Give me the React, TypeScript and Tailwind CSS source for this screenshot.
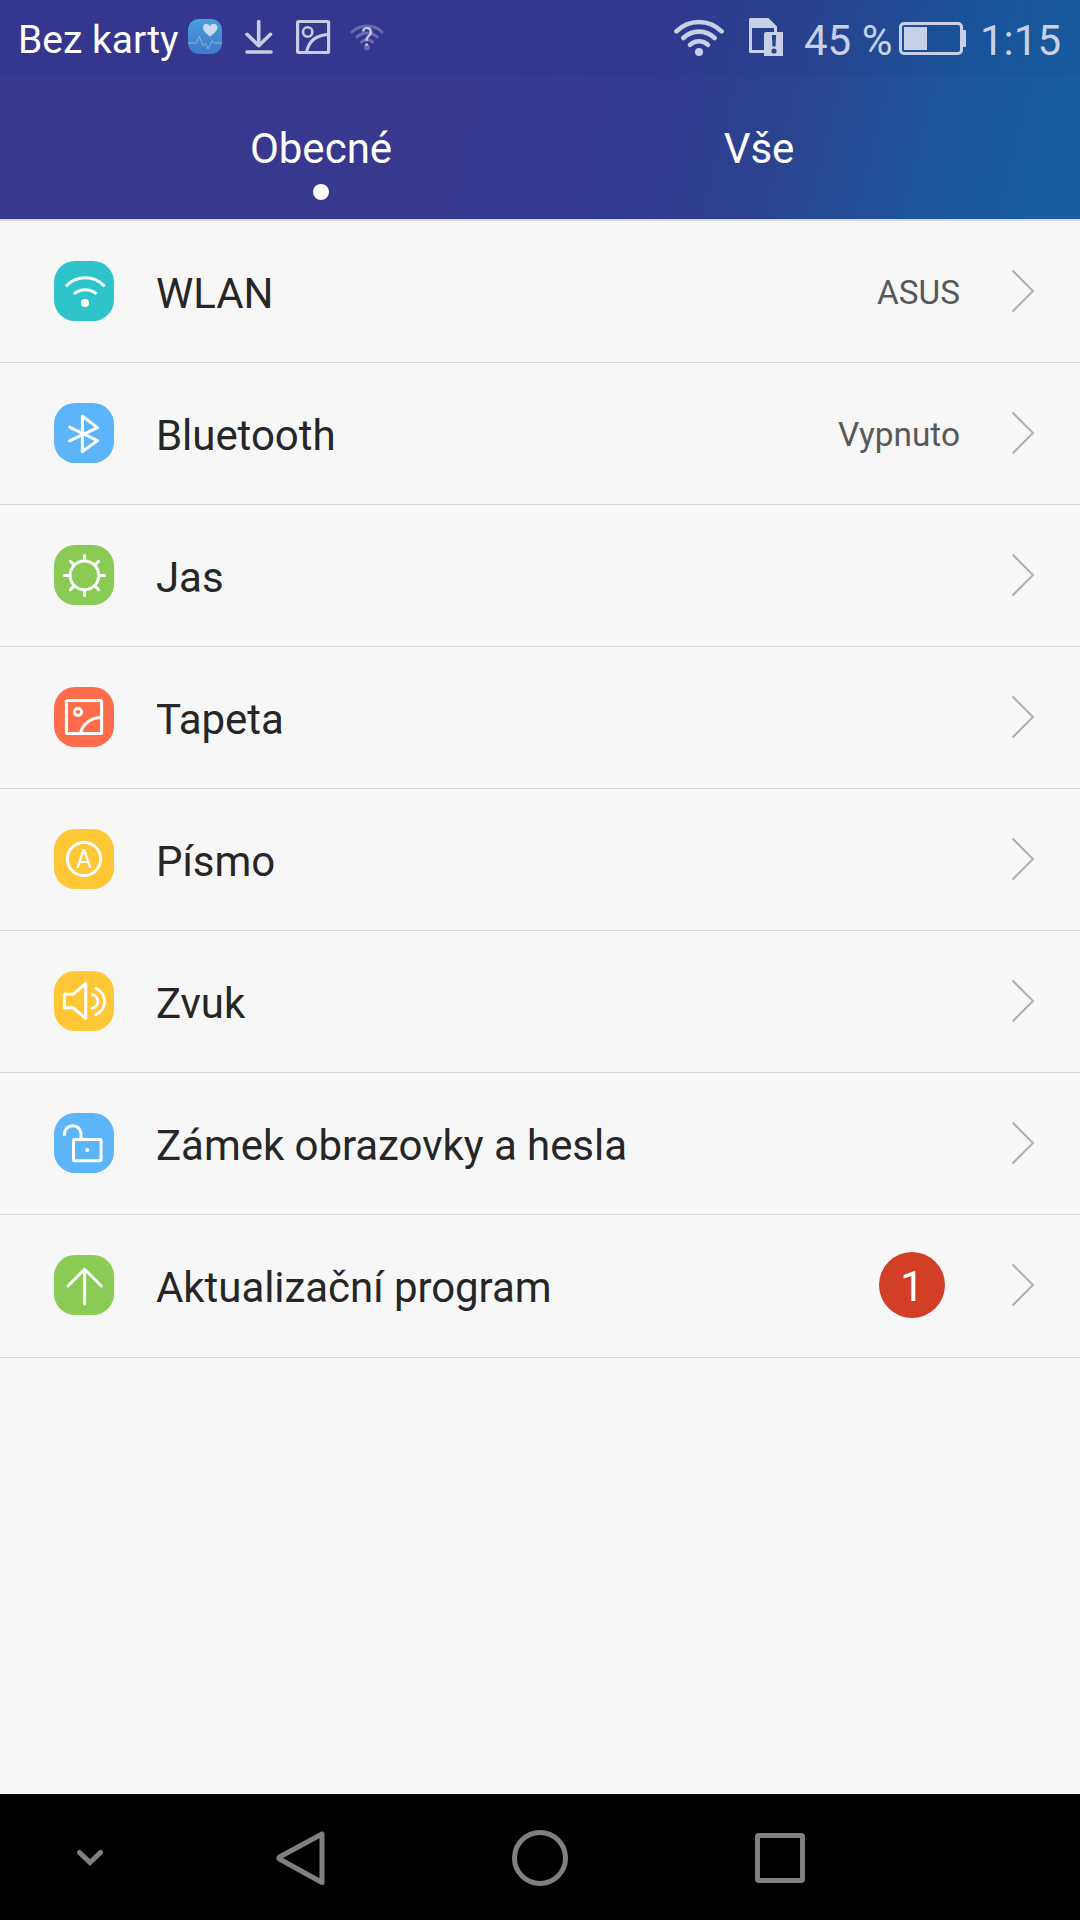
import React from 'react';

interface SettingItem {
  label: string;
  color: string;
  icon: React.ReactNode;
  value?: string;
  badge?: number;
}

// Glyphs are drawn on a 60x60 tile, white stroke
const items: SettingItem[] = [
  {
    label: 'WLAN',
    color: 'bg-[#2dc5cb]',
    value: 'ASUS',
    icon: (
      <>
        <path d="M12 25.2A26 26 0 0 1 50.5 25.2" />
        <path d="M20 33A17 17 0 0 1 42.5 33" />
        <circle cx="31" cy="42" r="4.1" fill="#fff" stroke="none" />
      </>
    ),
  },
  {
    label: 'Bluetooth',
    color: 'bg-[#5bb5f8]',
    value: 'Vypnuto',
    icon: <path d="M15.5 24.2L43.5 37.6L28.4 48.5V13.3L43.5 24.6L15.5 37.8" strokeLinecap="round" strokeLinejoin="round" />,
  },
  {
    label: 'Jas',
    color: 'bg-[#8acb55]',
    icon: (
      <>
        <circle cx="30.4" cy="30.4" r="14.3" />
        <path
          d="M30.4 15V10.4M30.4 46V50.5M15 30.4H10.4M46 30.4H50.5M20 20L16.4 16.4M41 20L44.6 16.4M20 41L16.4 44.6M41 41L44.6 44.6"
          strokeLinecap="round"
        />
      </>
    ),
  },
  {
    label: 'Tapeta',
    color: 'bg-[#ff6c4b]',
    icon: (
      <>
        <rect x="12.4" y="13.4" width="35.2" height="33.2" rx="1.2" />
        <circle cx="24" cy="25" r="3.6" />
        <path d="M26.5 46C29 36.5 37 30.6 47.5 30.4" />
      </>
    ),
  },
  {
    label: 'Písmo',
    color: 'bg-[#ffc635]',
    icon: (
      <>
        <circle cx="30" cy="30" r="16.6" />
        <text x="22" y="38.7" textLength="16" lengthAdjust="spacingAndGlyphs" fontSize="26" fill="#fff" stroke="none">
          A
        </text>
      </>
    ),
  },
  {
    label: 'Zvuk',
    color: 'bg-[#ffc635]',
    icon: (
      <>
        <path d="M10.4 23.3H19L31.7 12.5V47.5L19 36.7H10.4Z" strokeLinejoin="round" />
        <path d="M38.3 23.8A6.8 6.8 0 0 1 38.3 37.2M41.8 17.4A14.2 14.2 0 0 1 41.8 43.6" strokeLinecap="round" />
      </>
    ),
  },
  {
    label: 'Zámek obrazovky a hesla',
    color: 'bg-[#5bb5f8]',
    icon: (
      <>
        <rect x="19.5" y="26.4" width="27.6" height="21.4" rx="1" />
        <path d="M10.4 22.8V21A8.3 8.3 0 0 1 27 21V26" />
        <circle cx="33.2" cy="37" r="2" fill="#fff" stroke="none" />
      </>
    ),
  },
  {
    label: 'Aktualizační program',
    color: 'bg-[#8acb55]',
    badge: 1,
    icon: <path d="M30.6 49V14.5M14 31L30.6 14.3L47.3 31" strokeLinecap="round" strokeLinejoin="round" />,
  },
];

function HealthIcon() {
  return (
    <svg width="34" height="35" viewBox="0 0 34 35">
      <defs>
        <linearGradient id="health" x1="0" y1="0" x2="0" y2="1">
          <stop offset="0" stopColor="#489fdc" />
          <stop offset="1" stopColor="#3f78c8" />
        </linearGradient>
      </defs>
      <rect width="34" height="35" rx="11" fill="url(#health)" />
      <path d="M22 17.5C17.5 14 15 11.5 15 8.5C15 4 20 3.5 22 7C24 3.5 29.5 4 29.5 8.5C29.5 11.5 26.5 14 22 17.5Z" fill="#cdd8ee" />
      <path d="M0 24H8L11.5 17.5L15 27L17.5 24L20 30L24 22L27 24H34" fill="none" stroke="#7fb6e6" strokeWidth="1" />
    </svg>
  );
}

function StatusBar() {
  return (
    <div className="flex h-[75px] justify-between bg-[#103080]/[0.08] text-[#c8d0e7]">
      <div className="flex pt-[18px]">
        <span className="w-[188px] pl-[18px] text-[39px] leading-[44px] whitespace-nowrap text-white">Bez karty</span>
        <div className="flex gap-[22px] pt-px text-[#c9cbe4]">
          <HealthIcon />
          <svg width="30" height="35" viewBox="0 0 30 35" fill="none" stroke="currentColor" strokeWidth="3.6" strokeLinecap="round" strokeLinejoin="round">
            <path d="M14.7 2.5V26.5M3 15.3L14.7 26.7L26.5 15.3M3 33H27" />
          </svg>
          <svg width="35" height="35" viewBox="0 0 35 35" fill="none" stroke="currentColor" strokeWidth="3.2">
            <rect x="1.6" y="2.5" width="31" height="31" rx="1" />
            <circle cx="11.7" cy="13" r="4.7" strokeWidth="2.6" />
            <path d="M10.5 33C13 22 20 16 32 15.6" />
          </svg>
          <svg width="35" height="35" viewBox="0 0 35 35" fill="none" strokeLinecap="round" className="-ml-[3px]">
            <g stroke="#686bae" strokeWidth="3">
              <path d="M2 13A22 22 0 0 1 32 13" />
              <path d="M6.8 18A15 15 0 0 1 27.2 18" />
              <path d="M11.5 23A8 8 0 0 1 22.5 23" />
              <circle cx="17" cy="28.3" r="1.5" />
            </g>
            <text x="17" y="26.5" textAnchor="middle" fontSize="25" fill="#c9cbe4">?</text>
          </svg>
        </div>
      </div>

      <div className="flex pt-[18px]">
        {/* Wifi */}
        <svg width="50" height="38" viewBox="0 0 50 38" fill="none" stroke="currentColor" strokeWidth="4.6" strokeLinecap="round" className="mr-[25px]">
          <path d="M2.4 13.3A32 32 0 0 1 47.6 13.3" />
          <path d="M9.3 20A22.5 22.5 0 0 1 40.7 20" />
          <path d="M16 26.8A13 13 0 0 1 34 26.8" />
          <circle cx="25" cy="34" r="4" fill="currentColor" stroke="none" />
        </svg>
        {/* SIM missing */}
        <svg width="34" height="38" viewBox="0 0 34 38" fill="currentColor">
          <path fillRule="evenodd" d="M1.500 0H19.500L28 8.500V14H34V38H15V35H1.500Q0 35 0 33.500V1.500Q0 0 1.500 0ZM3 10V32H15V16Q15 14 17 14H25V10Z" />
          <path d="M22.800 17H27.200L26.500 28.500H23.500Z" fill="#23488f" />
          <circle cx="25" cy="33" r="2.6" fill="#23488f" />
        </svg>
        <span className="w-[116px] pl-[21px] text-[42px] leading-[46px] whitespace-nowrap">45 %</span>
        {/* Battery */}
        <svg width="68" height="38" viewBox="0 0 68 38" fill="none" stroke="currentColor" strokeWidth="3">
          <rect x="1.5" y="5.5" width="61" height="30" rx="3.5" />
          <rect x="5" y="9" width="23" height="23" fill="currentColor" stroke="none" />
          <path d="M64 12H66Q67 12 67 13V28Q67 29 66 29H64Z" fill="currentColor" stroke="none" />
        </svg>
        <span className="w-[113px] pl-[13px] text-[42px] leading-[46px] whitespace-nowrap">1:15</span>
      </div>
    </div>
  );
}

function Tab({ label, active = false }: { label: string; active?: boolean }) {
  return (
    <button className="flex w-[438px] flex-col items-center pt-[49px]">
      <span className="text-[42px] leading-[50px]">{label}</span>
      {active && <span className="mt-[10px] size-[16px] rounded-full bg-white" />}
    </button>
  );
}

function Row({ item }: { item: SettingItem }) {
  return (
    <li className="h-[142px] border-b border-[#d8d8d8] last:h-[143px]">
      <div className="flex h-[140px] items-center pr-[45px] pl-[54px]">
        <div className={`size-[60px] shrink-0 rounded-[21px] ${item.color}`}>
          <svg width="60" height="60" viewBox="0 0 60 60" fill="none" stroke="#fff" strokeWidth="3">
            {item.icon}
          </svg>
        </div>
        <span className="ml-[42px] grow pt-[5px] text-[42px] leading-[50px] tracking-[-0.05px] text-[#262626]">{item.label}</span>
        {item.value && <span className="mr-[51px] pt-[4px] text-[33.4px] leading-[40px] text-[#595959]">{item.value}</span>}
        {item.badge && (
          <span className="mr-[66px] flex size-[66px] items-center justify-center rounded-full bg-[#d33e27] pt-[3px] text-[42px] leading-none text-white">
            {item.badge}
          </span>
        )}
        <svg width="24" height="44" viewBox="0 0 24 44" fill="none" stroke="#b0b0b0" strokeWidth="2">
          <path d="M1.5 1.500L22 22L1.5 42.5" />
        </svg>
      </div>
    </li>
  );
}

function NavBar() {
  return (
    <nav className="flex h-[126px] items-center bg-black pt-[2px] pl-[77px]">
      <svg width="26" height="56" viewBox="0 0 26 56" fill="none" stroke="#808080" strokeWidth="5" strokeLinecap="round">
        <path d="M2.5 22.5L13 32.5L23.5 22.5" />
      </svg>
      <svg width="50" height="56" viewBox="0 0 50 56" fill="none" stroke="#808080" strokeWidth="5" strokeLinejoin="round" className="ml-[173px]">
        <path d="M46 4V52.5L3.5 29Q2 28 3.5 27Z" />
      </svg>
      <svg width="56" height="56" viewBox="0 0 56 56" fill="none" stroke="#808080" strokeWidth="5" className="ml-[186px]">
        <circle cx="28" cy="28" r="25.5" />
      </svg>
      <svg width="50" height="56" viewBox="0 0 50 56" fill="none" stroke="#808080" strokeWidth="5" className="ml-[187px]">
        <rect x="2.5" y="5.5" width="45" height="45" rx="1.5" />
      </svg>
    </nav>
  );
}

export default function App() {
  return (
    <div className="flex h-[1920px] w-[1080px] flex-col overflow-hidden bg-[#f7f7f7] font-['Roboto',sans-serif]">
      <header className="h-[221px] border-b-2 border-[#d9d9d9] bg-[linear-gradient(104deg,#38388f_0%,#38388f_44%,#323a90_61%,#2b438f_71%,#1c549b_85%,#185ea0_96%)] bg-origin-border text-white">
        <StatusBar />
        <div className="flex h-[144px] items-start justify-center">
          <Tab label="Obecné" active />
          <Tab label="Vše" />
        </div>
      </header>

      <ul className="grow">
        {items.map((item) => (
          <Row key={item.label} item={item} />
        ))}
      </ul>

      <NavBar />
    </div>
  );
}
